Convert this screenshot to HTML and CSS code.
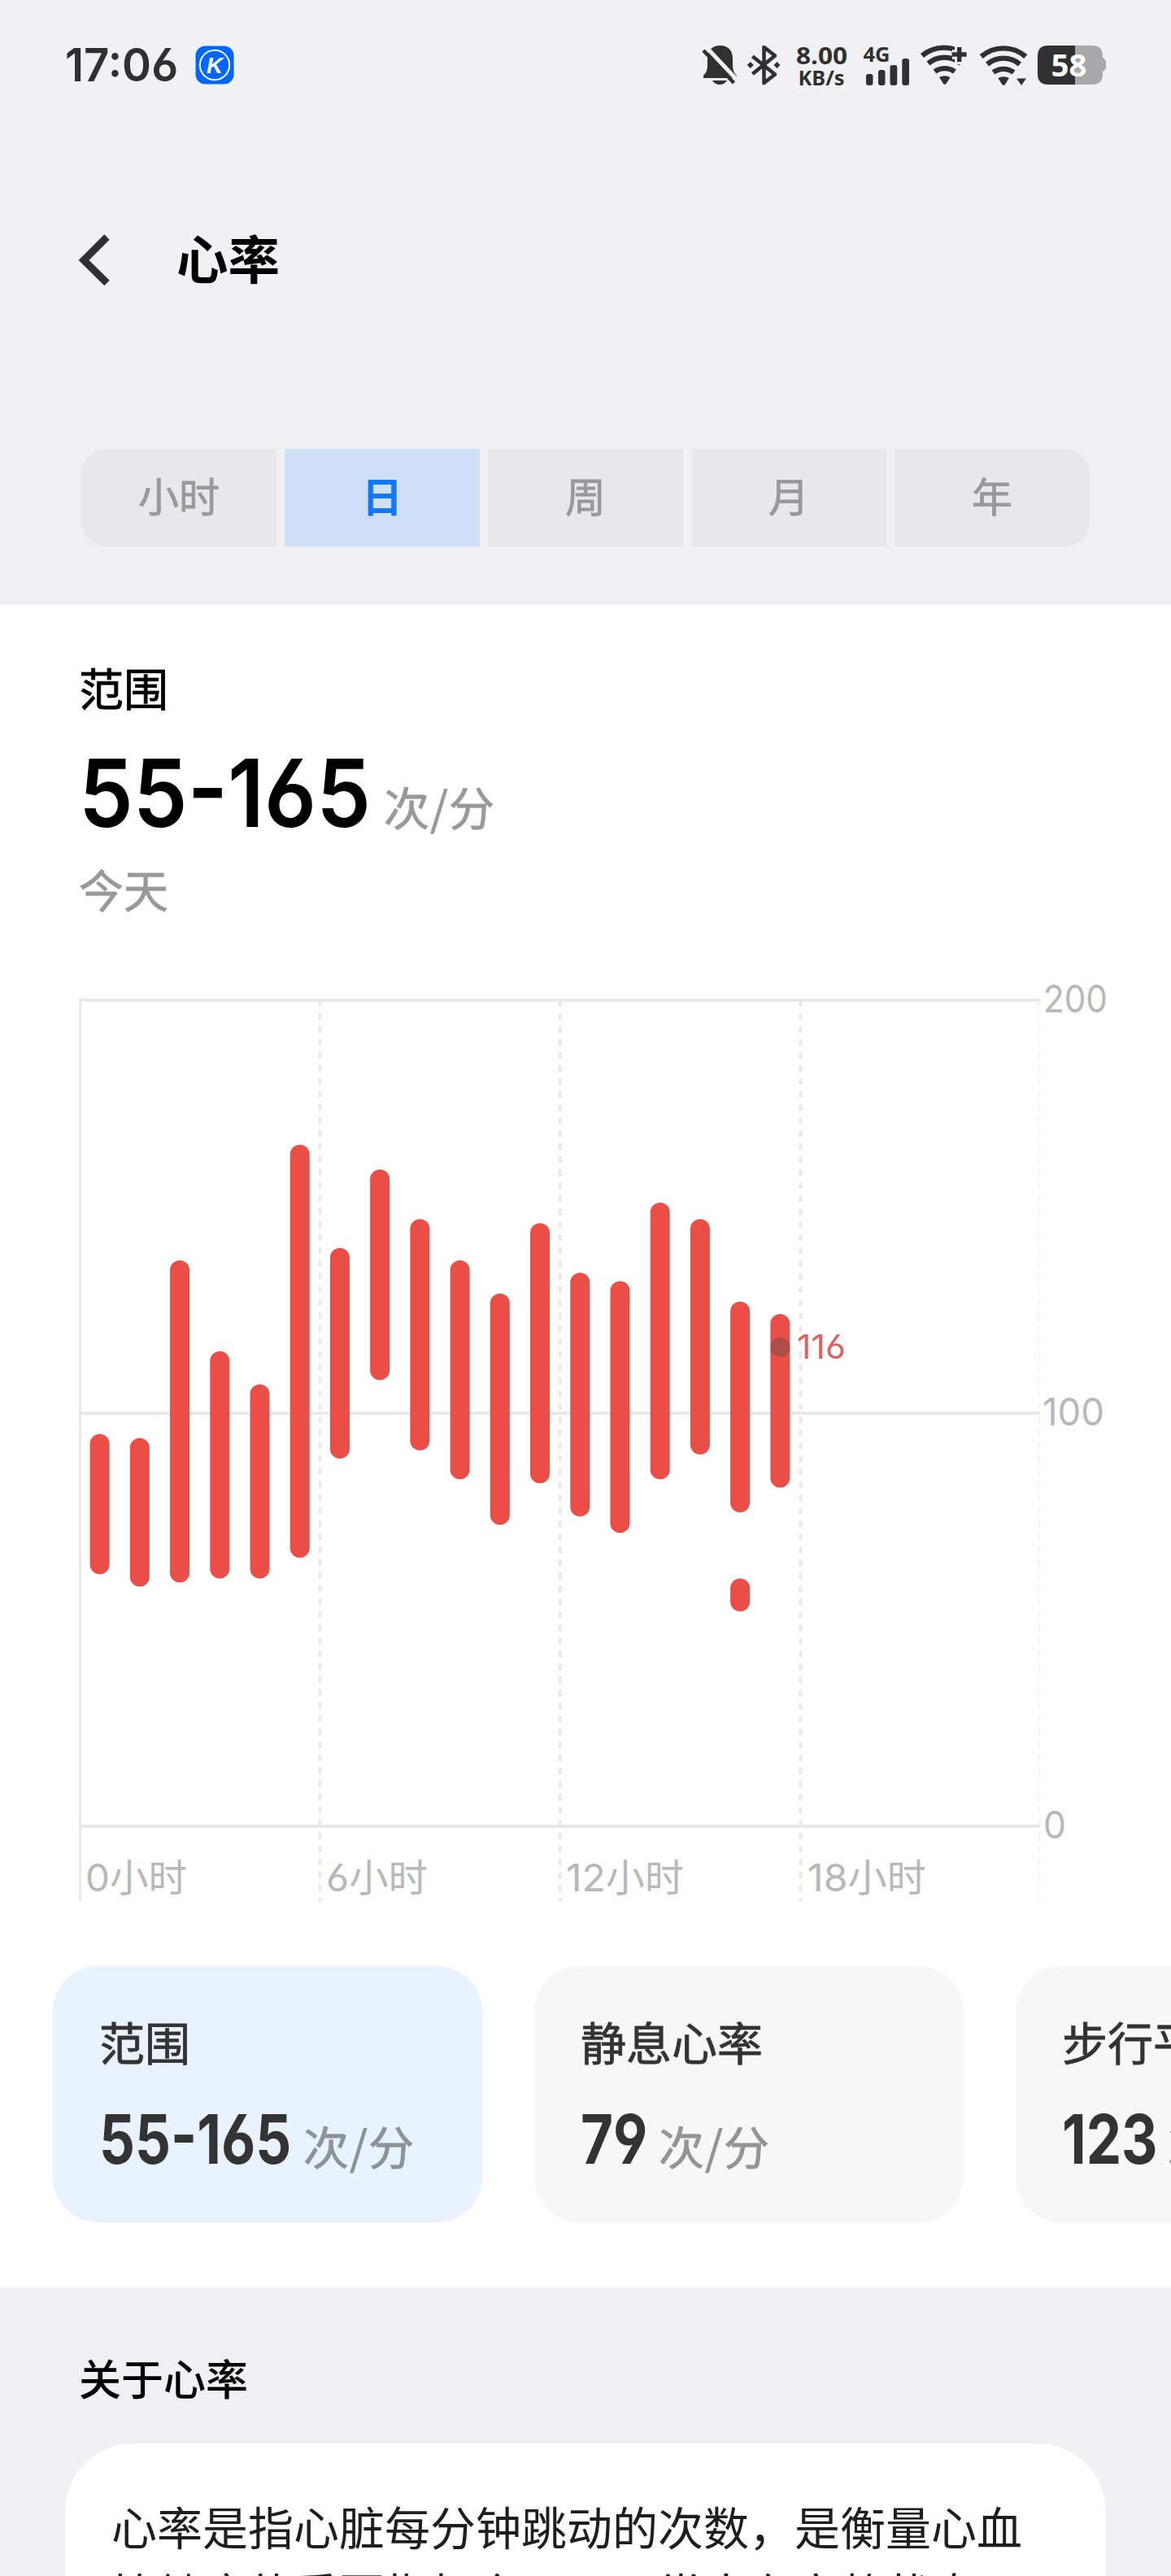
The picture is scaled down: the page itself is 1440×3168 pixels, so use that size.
FILE: index.html
```html
<!DOCTYPE html>
<html lang="zh-CN">
<head>
<meta charset="utf-8">
<title>心率</title>
<link rel="stylesheet" href="styles.css">
</head>
<body>
<header class="status">
  <span class="clock">17:06</span>
  <svg class="applogo" width="48" height="48" viewBox="0 0 48 48">
    <rect x=".5" y=".5" width="47" height="47" rx="12" fill="#0066ff"/>
    <circle cx="24" cy="24" r="18.2" fill="none" stroke="#fff" stroke-width="2"/>
    <text x="14" y="34" class="logo-k" textLength="20" lengthAdjust="spacingAndGlyphs">K</text>
  </svg>
  <div class="status-icons">
    <svg width="46" height="60" viewBox="862 50 46 60">
      <path d="M865 96v-3c4-4 5-8 5-14v-7c0-10 6-16 15.500-16s15.500 6 15.500 16v7c0 6 1 10 5 14v3zM876 99h18q-3 5-9 5t-9-5z" fill="#303030"/>
      <path d="M868 57.500L909 101" stroke="#f1f1f4" stroke-width="5"/>
      <path d="M865 62L902.500 102" stroke="#303030" stroke-width="4.500"/>
    </svg>
    <svg class="g8" width="46" height="60" viewBox="916 50 46 60">
      <path d="M925.400 69.300L953 91.500L939.500 102V58L953 68.500L925.400 91" fill="none" stroke="#303030" stroke-width="4.600" stroke-linejoin="round"/>
      <path d="M922.800 76l4 4-4 4-4-4zM955.500 76l4 4-4 4-4-4z" fill="#303030"/>
    </svg>
    <svg class="g14" width="68" height="60" viewBox="976 50 68 60">
      <text x="979" y="78.500" class="tiny" font-size="29" textLength="63" lengthAdjust="spacingAndGlyphs">8.00</text>
      <text x="981.500" y="104.500" class="tiny" font-size="25.500" textLength="57" lengthAdjust="spacingAndGlyphs">KB/s</text>
    </svg>
    <svg class="g16" width="60" height="60" viewBox="1060 50 60 60">
      <text x="1061.500" y="75.700" class="tiny" font-size="25" textLength="33" lengthAdjust="spacingAndGlyphs">4G</text>
      <g fill="#303030">
        <rect x="1065" y="91" width="8.500" height="14" rx="3"/>
        <rect x="1080" y="86" width="8.500" height="19" rx="3"/>
        <rect x="1094.500" y="80" width="8.800" height="25" rx="3"/>
        <rect x="1109.300" y="72" width="8.700" height="33" rx="3"/>
      </g>
    </svg>
    <svg class="g10" width="62" height="60" viewBox="1130 50 62 60">
      <g fill="none" stroke="#303030" stroke-width="6.300">
        <path d="M1134 68.500A41.700 41.700 0 0 1 1188 68.500"/>
        <path d="M1141.500 78A31 31 0 0 1 1181.500 78"/>
        <path d="M1149.500 88A21 21 0 0 1 1174 88"/>
      </g>
      <path d="M1155 95q6.500-3.500 13.500 0l-5 8q-1.700 1.700-3.400 0z" fill="#303030"/>
      <path d="M1171 67h22M1179.800 54v25" stroke="#f1f1f4" stroke-width="11.500"/>
      <path d="M1170.500 67h18.200M1179.700 58v18" stroke="#303030" stroke-width="5.400"/>
    </svg>
    <svg class="g11" width="62" height="60" viewBox="1203 50 62 60">
      <g fill="none" stroke="#303030" stroke-width="6.300">
        <path d="M1206.700 69.500A41.700 41.700 0 0 1 1261.300 69.500"/>
        <path d="M1214 79A31 31 0 0 1 1254 79"/>
        <path d="M1221.500 89A21 21 0 0 1 1246.500 89"/>
      </g>
      <path d="M1227.300 96q6.700-3.500 13.500 0l-5 8q-1.700 1.700-3.400 0zM1250 96.500h12l-6 8.500z" fill="#303030"/>
    </svg>
    <svg class="g10" width="86" height="60" viewBox="1275 50 86 60">
      <path d="M1355 71q5 1 5 6v6q0 4-5 5z" fill="#a9a9ab"/>
      <path d="M1322 56h21q13 0 13 13v22q0 13-13 13h-21z" fill="#a9a9ab"/>
      <path d="M1322 56h-33q-13 0-13 13v22q0 13 13 13h33z" fill="#303030"/>
      <text x="1292.500" y="93.500" class="charge" textLength="44" lengthAdjust="spacingAndGlyphs">58</text>
    </svg>
  </div>
</header>

<nav class="titlebar">
  <svg width="44" height="70" viewBox="94 285 44 70"><path d="M131.500 291.500L103 320L131.500 348" fill="none" stroke="#303030" stroke-width="9" stroke-linejoin="miter"/></svg>
  <h1>心率</h1>
</nav>

<div class="tabs">
  <div class="tab">小时</div>
  <div class="tab active">日</div>
  <div class="tab">周</div>
  <div class="tab">月</div>
  <div class="tab">年</div>
</div>

<main class="panel">
  <div class="label">范围</div>
  <div class="value-row"><span class="value"><span class="squeeze">55-165</span></span><span class="unit">次/分</span></div>
  <div class="label day">今天</div>

  <svg class="chart" width="1440" height="1140" viewBox="0 1200 1440 1140">
    <g stroke="#e9e9e9" stroke-width="4">
      <path d="M97 1230H1279M97 1738H1279M97 2246H1279"/>
      <path d="M98.500 1230V2338" stroke-width="3"/>
      <path d="M393.500 1230V2338M688.800 1230V2338M984.500 1230V2338" stroke-dasharray="8 8"/>
      <path d="M1278.500 1230V2338" stroke-width="1" stroke-dasharray="8 8"/>
    </g>
    <g id="bars" fill="#eb4d47"></g>
    <circle cx="959.500" cy="1656.700" r="12" fill="#ae4c48"/>
    <text class="now" x="980" y="1670.500" textLength="60" lengthAdjust="spacingAndGlyphs">116</text>
    <g class="axis">
      <text x="1283" y="1244.500" textLength="79" lengthAdjust="spacingAndGlyphs">200</text>
      <text x="1282" y="1752.700" textLength="76" lengthAdjust="spacingAndGlyphs">100</text>
      <text x="1283" y="2260.700" textLength="28" lengthAdjust="spacingAndGlyphs">0</text>
      <text x="105" y="2326" textLength="125" lengthAdjust="spacingAndGlyphs">0小时</text>
      <text x="401" y="2326" textLength="125" lengthAdjust="spacingAndGlyphs">6小时</text>
      <text x="696" y="2326" textLength="145" lengthAdjust="spacingAndGlyphs">12小时</text>
      <text x="993" y="2326" textLength="146" lengthAdjust="spacingAndGlyphs">18小时</text>
    </g>
  </svg>

  <div class="cards">
    <section class="card selected">
      <div class="card-label">范围</div>
      <div class="value-row"><span class="card-value w-range"><span class="squeeze">55-165</span></span><span class="unit">次/分</span></div>
    </section>
    <section class="card">
      <div class="card-label">静息心率</div>
      <div class="value-row"><span class="card-value w-rest"><span class="squeeze">79</span></span><span class="unit">次/分</span></div>
    </section>
    <section class="card">
      <div class="card-label">步行平均心率</div>
      <div class="value-row"><span class="card-value w-walk"><span class="squeeze">123</span></span><span class="unit">次/分</span></div>
    </section>
  </div>
</main>

<section class="about">
  <h2>关于心率</h2>
  <div class="about-card">心率是指心脏每分钟跳动的次数，是衡量心血管健康的重要指标之一。正常人在安静状态下</div>
</section>
<script src="chart.js"></script>
</body>
</html>
```
FILE: styles.css
```css
* { box-sizing: border-box; }
body {
  margin: 0;
  width: 1440px;
  height: 3168px;
  overflow: hidden;
  background: #f1f1f4;
  color: #000;
  font-family: "Noto Sans CJK SC", sans-serif;
}
svg { display: block; flex: none; }
h1, h2 { margin: 0; }

.status {
  display: flex;
  align-items: center;
  height: 160px;
  padding: 0 79px 0 80px;
}
.clock {
  font: 600 56px/60px Inter, "Noto Sans CJK SC", sans-serif;
  font-feature-settings: "cv03", "cv04";
  color: #303030;
  width: 160px;
  white-space: nowrap;
  transform: scaleX(.975);
  transform-origin: left;
}
.logo-k { font: italic 700 28px "Liberation Sans", sans-serif; fill: #fff; }
.status-icons { display: flex; margin-left: auto; }
.g8 { margin-left: 8px; }
.g10 { margin-left: 10px; }
.g11 { margin-left: 11px; }
.g14 { margin-left: 14px; }
.g16 { margin-left: 16px; }
.tiny { font-family: "Noto Sans", sans-serif; font-weight: 700; fill: #303030; }
.charge { font: 700 38px "Noto Sans", sans-serif; fill: #fff; }

.titlebar {
  display: flex;
  align-items: center;
  gap: 79px;
  height: 320px;
  padding-left: 94px;
}
.titlebar h1 { font-size: 63.5px; line-height: 80px; font-weight: 700; margin-bottom: 10px; }

.tabs {
  display: flex;
  gap: 10px;
  height: 120px;
  margin: 72px 100px;
  border-radius: 30px;
  overflow: hidden;
}
.tab {
  flex: 1;
  background: #e8e8ea;
  color: #999;
  font-size: 50px;
  line-height: 112px;
  text-align: center;
  -webkit-text-stroke: .8px currentColor;
}
.tab.active { background: #cfdff6; color: #1377ff; font-weight: 700; -webkit-text-stroke: 0; }

.panel { height: 2069px; background: #fff; padding-top: 60px; overflow: hidden; }
.label { font-size: 55px; line-height: 80px; margin-left: 97px; -webkit-text-stroke: .8px currentColor; }
.label.day { color: #999; margin-top: 17px; }
.value-row { display: flex; align-items: baseline; white-space: nowrap; }
.panel > .value-row { margin: 31px 0 0 97px; height: 120px; }
.squeeze { display: inline-block; transform-origin: left; font-feature-settings: "cv03", "cv04"; }
.value { width: 375px; font: 600 115.5px/120px Inter, sans-serif; }
.value .squeeze { transform: scaleX(.92); }
.unit {
  font-size: 56px;
  line-height: 56px;
  letter-spacing: 1px;
  color: #999;
  -webkit-text-stroke: .8px currentColor;
  position: relative;
  top: -2px;
}

.chart { margin-top: 68px; }
.axis { font: 400 47px Inter, "Noto Sans CJK SC", sans-serif; fill: #b8b8b8; font-feature-settings: "cv03"; }
.now { font: 400 41px Inter, sans-serif; fill: #d96560; font-feature-settings: "cv03"; }

.cards { display: flex; gap: 64px; margin: 78px 0 0 65px; }
.card {
  flex: none;
  width: 528px;
  height: 315px;
  padding: 52px 0 0 57px;
  border-radius: 56px;
  background: #f7f7f7;
  color: #333;
}
.card.selected { background: #e8f3ff; }
.card-label { font-size: 56px; line-height: 80px; -webkit-text-stroke: .8px currentColor; }
.card .value-row { margin-top: 36px; }
.card .unit { top: 1px; color: #949494; }
.card.selected .unit { color: #8d9299; }
.card-value { font: 700 84px/90px Inter, sans-serif; }
.card-value .squeeze { transform: scaleX(.82); }
.w-range { width: 251px; }
.w-rest { width: 96px; }
.w-walk { width: 130px; }

.about { height: 355px; padding: 71px 80px 0; overflow: hidden; }
.about h2 { font-size: 52px; line-height: 80px; font-weight: 500; padding-left: 17px; }
.about-card {
  height: 163px;
  margin-top: 41px;
  padding: 60px 60px 0 57px;
  border-radius: 84px 84px 0 0;
  background: #fff;
  color: #1e1e1e;
  font-size: 56px;
  line-height: 82px;
  overflow: hidden;
}
```
FILE: chart.js
```js
// Hourly [hour, min, max] heart-rate ranges.
const ranges = [
  [0, 61, 95], [1, 58, 94], [2, 59, 137], [3, 60, 115], [4, 60, 107], [5, 65, 165],
  [6, 89, 140], [7, 108, 159], [8, 91, 147], [9, 84, 137], [10, 73, 129], [11, 83, 146],
  [12, 75, 134], [13, 71, 132], [14, 84, 151], [15, 90, 147], [16, 76, 127], [16, 52, 60],
  [17, 82, 124]
];
const y = v => 2246 - v * 5.08;
const group = document.getElementById('bars');
for (const [hour, min, max] of ranges) {
  const bar = document.createElementNS('http://www.w3.org/2000/svg', 'rect');
  bar.setAttribute('x', 98 + 49.22 * (hour + 0.5) - 12);
  bar.setAttribute('y', y(max));
  bar.setAttribute('width', 24);
  bar.setAttribute('height', y(min) - y(max));
  bar.setAttribute('rx', 12);
  group.appendChild(bar);
}
```
